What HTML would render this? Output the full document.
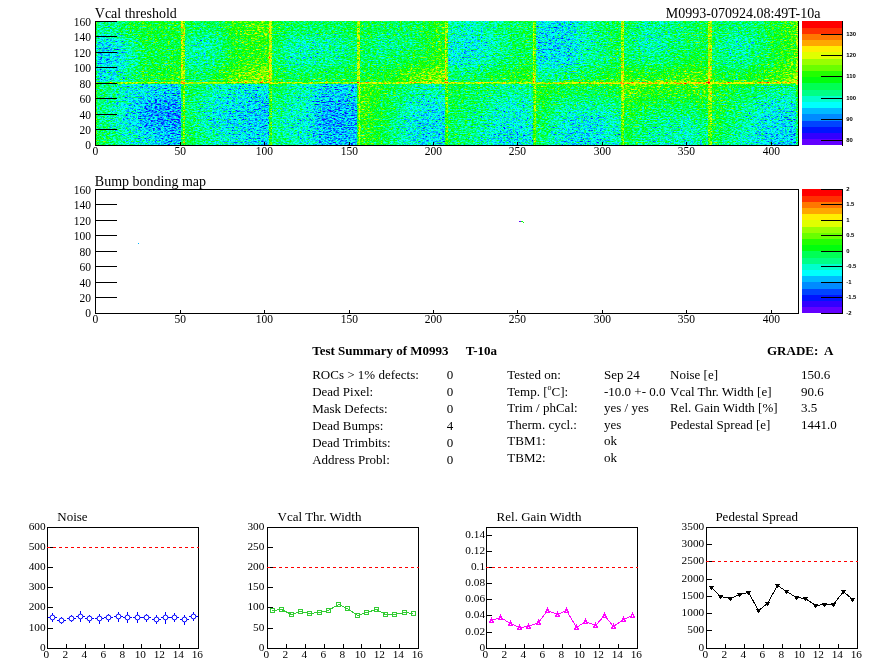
<!DOCTYPE html><html><head><meta charset="utf-8"><title>Test Summary of M0993</title>
<style>html,body{margin:0;padding:0;background:#fff}svg{display:block;will-change:transform}text{font-family:'Liberation Serif','Times New Roman',serif;fill:#000}.cb{font-family:'Liberation Sans',Arial,sans-serif;font-weight:bold;font-size:5.9px}.ax{font-size:11.5px}.gx{font-size:11.3px}.t{font-size:14px}.s{font-size:13px}.b{font-weight:bold}line,path,polyline,rect,circle{shape-rendering:crispEdges}.aa{shape-rendering:auto}</style></head><body>
<svg width="896" height="672" viewBox="0 0 896 672">
<rect width="896" height="672" fill="#fff"/>
<defs>
<filter id="bl" x="-20%" y="-20%" width="140%" height="140%" color-interpolation-filters="sRGB"><feGaussianBlur stdDeviation="5 4"/></filter>
<filter id="hm" x="95" y="21" width="703" height="124" filterUnits="userSpaceOnUse" color-interpolation-filters="sRGB"><feTurbulence type="fractalNoise" baseFrequency="0.31 0.73" numOctaves="1" seed="11" result="n1"/><feTurbulence type="fractalNoise" baseFrequency="0.47 0.87" numOctaves="1" seed="5" result="n2"/><feComposite in="n1" in2="n2" operator="arithmetic" k1="0" k2="0.5" k3="0.5" k4="0" result="n"/><feColorMatrix in="n" type="matrix" values="1 0 0 0 0 1 0 0 0 0 1 0 0 0 0 0 0 0 0 1" result="ng"/><feComposite in="SourceGraphic" in2="ng" operator="arithmetic" k1="0" k2="1" k3="0.950" k4="-0.4750" result="v"/><feComponentTransfer in="v"><feFuncR type="discrete" tableValues="0.387 0.200 0.000 0.000 0.000 0.000 0.000 0.000 0.000 0.000 0.000 0.133 0.413 0.600 0.880 1.000 1.000 1.000 1.000 1.000"/><feFuncG type="discrete" tableValues="0.000 0.000 0.080 0.267 0.547 0.733 1.000 1.000 1.000 1.000 1.000 1.000 1.000 1.000 1.000 0.933 0.653 0.467 0.187 0.000"/><feFuncB type="discrete" tableValues="1.000 1.000 1.000 1.000 1.000 1.000 0.987 0.800 0.520 0.333 0.053 0.000 0.000 0.000 0.000 0.000 0.000 0.000 0.000 0.000"/></feComponentTransfer></filter>
<clipPath id="c00"><rect x="95.50" y="21.50" width="87.88" height="62.00"/></clipPath>
<clipPath id="c01"><rect x="95.50" y="83.50" width="87.88" height="62.00"/></clipPath>
<clipPath id="c10"><rect x="183.38" y="21.50" width="87.88" height="62.00"/></clipPath>
<clipPath id="c11"><rect x="183.38" y="83.50" width="87.88" height="62.00"/></clipPath>
<clipPath id="c20"><rect x="271.25" y="21.50" width="87.88" height="62.00"/></clipPath>
<clipPath id="c21"><rect x="271.25" y="83.50" width="87.88" height="62.00"/></clipPath>
<clipPath id="c30"><rect x="359.12" y="21.50" width="87.88" height="62.00"/></clipPath>
<clipPath id="c31"><rect x="359.12" y="83.50" width="87.88" height="62.00"/></clipPath>
<clipPath id="c40"><rect x="447.00" y="21.50" width="87.88" height="62.00"/></clipPath>
<clipPath id="c41"><rect x="447.00" y="83.50" width="87.88" height="62.00"/></clipPath>
<clipPath id="c50"><rect x="534.88" y="21.50" width="87.88" height="62.00"/></clipPath>
<clipPath id="c51"><rect x="534.88" y="83.50" width="87.88" height="62.00"/></clipPath>
<clipPath id="c60"><rect x="622.75" y="21.50" width="87.88" height="62.00"/></clipPath>
<clipPath id="c61"><rect x="622.75" y="83.50" width="87.88" height="62.00"/></clipPath>
<clipPath id="c70"><rect x="710.62" y="21.50" width="87.88" height="62.00"/></clipPath>
<clipPath id="c71"><rect x="710.62" y="83.50" width="87.88" height="62.00"/></clipPath>
</defs>
<g filter="url(#hm)">
<rect x="95.00" y="21.00" width="703.00" height="124.00" fill="#6c6c6c"/>
<g clip-path="url(#c00)" transform="translate(-0.5,-0.5)"><g filter="url(#bl)">
<rect x="80.5" y="9.5" width="29.9" height="27.8" fill="#6a6a6a"/>
<rect x="110.1" y="9.5" width="14.9" height="27.8" fill="#707070"/>
<rect x="124.8" y="9.5" width="14.9" height="27.8" fill="#7d7d7d"/>
<rect x="139.4" y="9.5" width="14.9" height="27.8" fill="#838383"/>
<rect x="154.1" y="9.5" width="14.9" height="27.8" fill="#838383"/>
<rect x="168.7" y="9.5" width="29.9" height="27.8" fill="#838383"/>
<rect x="80.5" y="37.0" width="29.9" height="15.8" fill="#505050"/>
<rect x="110.1" y="37.0" width="14.9" height="15.8" fill="#545454"/>
<rect x="124.8" y="37.0" width="14.9" height="15.8" fill="#6a6a6a"/>
<rect x="139.4" y="37.0" width="14.9" height="15.8" fill="#7d7d7d"/>
<rect x="154.1" y="37.0" width="14.9" height="15.8" fill="#7d7d7d"/>
<rect x="168.7" y="37.0" width="29.9" height="15.8" fill="#7d7d7d"/>
<rect x="80.5" y="52.5" width="29.9" height="15.8" fill="#4c4c4c"/>
<rect x="110.1" y="52.5" width="14.9" height="15.8" fill="#545454"/>
<rect x="124.8" y="52.5" width="14.9" height="15.8" fill="#636363"/>
<rect x="139.4" y="52.5" width="14.9" height="15.8" fill="#7d7d7d"/>
<rect x="154.1" y="52.5" width="14.9" height="15.8" fill="#7d7d7d"/>
<rect x="168.7" y="52.5" width="29.9" height="15.8" fill="#838383"/>
<rect x="80.5" y="68.0" width="29.9" height="27.8" fill="#545454"/>
<rect x="110.1" y="68.0" width="14.9" height="27.8" fill="#5d5d5d"/>
<rect x="124.8" y="68.0" width="14.9" height="27.8" fill="#707070"/>
<rect x="139.4" y="68.0" width="14.9" height="27.8" fill="#838383"/>
<rect x="154.1" y="68.0" width="14.9" height="27.8" fill="#838383"/>
<rect x="168.7" y="68.0" width="29.9" height="27.8" fill="#8a8a8a"/>
</g></g>
<g clip-path="url(#c01)" transform="translate(-0.5,-0.5)"><g filter="url(#bl)">
<rect x="80.5" y="71.5" width="29.9" height="27.8" fill="#737373"/>
<rect x="110.1" y="71.5" width="14.9" height="27.8" fill="#666666"/>
<rect x="124.8" y="71.5" width="14.9" height="27.8" fill="#595959"/>
<rect x="139.4" y="71.5" width="14.9" height="27.8" fill="#525252"/>
<rect x="154.1" y="71.5" width="14.9" height="27.8" fill="#4e4e4e"/>
<rect x="168.7" y="71.5" width="29.9" height="27.8" fill="#4e4e4e"/>
<rect x="80.5" y="99.0" width="29.9" height="15.8" fill="#6c6c6c"/>
<rect x="110.1" y="99.0" width="14.9" height="15.8" fill="#606060"/>
<rect x="124.8" y="99.0" width="14.9" height="15.8" fill="#525252"/>
<rect x="139.4" y="99.0" width="14.9" height="15.8" fill="#424242"/>
<rect x="154.1" y="99.0" width="14.9" height="15.8" fill="#3e3e3e"/>
<rect x="168.7" y="99.0" width="29.9" height="15.8" fill="#3e3e3e"/>
<rect x="80.5" y="114.5" width="29.9" height="15.8" fill="#6c6c6c"/>
<rect x="110.1" y="114.5" width="14.9" height="15.8" fill="#606060"/>
<rect x="124.8" y="114.5" width="14.9" height="15.8" fill="#525252"/>
<rect x="139.4" y="114.5" width="14.9" height="15.8" fill="#424242"/>
<rect x="154.1" y="114.5" width="14.9" height="15.8" fill="#3e3e3e"/>
<rect x="168.7" y="114.5" width="29.9" height="15.8" fill="#3e3e3e"/>
<rect x="80.5" y="130.0" width="29.9" height="27.8" fill="#797979"/>
<rect x="110.1" y="130.0" width="14.9" height="27.8" fill="#6c6c6c"/>
<rect x="124.8" y="130.0" width="14.9" height="27.8" fill="#606060"/>
<rect x="139.4" y="130.0" width="14.9" height="27.8" fill="#555555"/>
<rect x="154.1" y="130.0" width="14.9" height="27.8" fill="#4a4a4a"/>
<rect x="168.7" y="130.0" width="29.9" height="27.8" fill="#464646"/>
</g></g>
<g clip-path="url(#c10)" transform="translate(-0.5,-0.5)"><g filter="url(#bl)">
<rect x="168.4" y="9.5" width="29.9" height="27.8" fill="#797979"/>
<rect x="198.0" y="9.5" width="14.9" height="27.8" fill="#737373"/>
<rect x="212.7" y="9.5" width="14.9" height="27.8" fill="#797979"/>
<rect x="227.3" y="9.5" width="14.9" height="27.8" fill="#8c8c8c"/>
<rect x="242.0" y="9.5" width="14.9" height="27.8" fill="#939393"/>
<rect x="256.6" y="9.5" width="29.9" height="27.8" fill="#999999"/>
<rect x="168.4" y="37.0" width="29.9" height="15.8" fill="#666666"/>
<rect x="198.0" y="37.0" width="14.9" height="15.8" fill="#606060"/>
<rect x="212.7" y="37.0" width="14.9" height="15.8" fill="#6c6c6c"/>
<rect x="227.3" y="37.0" width="14.9" height="15.8" fill="#868686"/>
<rect x="242.0" y="37.0" width="14.9" height="15.8" fill="#8c8c8c"/>
<rect x="256.6" y="37.0" width="29.9" height="15.8" fill="#8c8c8c"/>
<rect x="168.4" y="52.5" width="29.9" height="15.8" fill="#666666"/>
<rect x="198.0" y="52.5" width="14.9" height="15.8" fill="#666666"/>
<rect x="212.7" y="52.5" width="14.9" height="15.8" fill="#737373"/>
<rect x="227.3" y="52.5" width="14.9" height="15.8" fill="#868686"/>
<rect x="242.0" y="52.5" width="14.9" height="15.8" fill="#8c8c8c"/>
<rect x="256.6" y="52.5" width="29.9" height="15.8" fill="#939393"/>
<rect x="168.4" y="68.0" width="29.9" height="27.8" fill="#797979"/>
<rect x="198.0" y="68.0" width="14.9" height="27.8" fill="#737373"/>
<rect x="212.7" y="68.0" width="14.9" height="27.8" fill="#868686"/>
<rect x="227.3" y="68.0" width="14.9" height="27.8" fill="#999999"/>
<rect x="242.0" y="68.0" width="14.9" height="27.8" fill="#9f9f9f"/>
<rect x="256.6" y="68.0" width="29.9" height="27.8" fill="#a6a6a6"/>
</g></g>
<g clip-path="url(#c11)" transform="translate(-0.5,-0.5)"><g filter="url(#bl)">
<rect x="168.4" y="71.5" width="29.9" height="27.8" fill="#797979"/>
<rect x="198.0" y="71.5" width="14.9" height="27.8" fill="#6c6c6c"/>
<rect x="212.7" y="71.5" width="14.9" height="27.8" fill="#606060"/>
<rect x="227.3" y="71.5" width="14.9" height="27.8" fill="#595959"/>
<rect x="242.0" y="71.5" width="14.9" height="27.8" fill="#555555"/>
<rect x="256.6" y="71.5" width="29.9" height="27.8" fill="#555555"/>
<rect x="168.4" y="99.0" width="29.9" height="15.8" fill="#737373"/>
<rect x="198.0" y="99.0" width="14.9" height="15.8" fill="#606060"/>
<rect x="212.7" y="99.0" width="14.9" height="15.8" fill="#555555"/>
<rect x="227.3" y="99.0" width="14.9" height="15.8" fill="#525252"/>
<rect x="242.0" y="99.0" width="14.9" height="15.8" fill="#4e4e4e"/>
<rect x="256.6" y="99.0" width="29.9" height="15.8" fill="#4a4a4a"/>
<rect x="168.4" y="114.5" width="29.9" height="15.8" fill="#737373"/>
<rect x="198.0" y="114.5" width="14.9" height="15.8" fill="#606060"/>
<rect x="212.7" y="114.5" width="14.9" height="15.8" fill="#555555"/>
<rect x="227.3" y="114.5" width="14.9" height="15.8" fill="#525252"/>
<rect x="242.0" y="114.5" width="14.9" height="15.8" fill="#4e4e4e"/>
<rect x="256.6" y="114.5" width="29.9" height="15.8" fill="#4a4a4a"/>
<rect x="168.4" y="130.0" width="29.9" height="27.8" fill="#797979"/>
<rect x="198.0" y="130.0" width="14.9" height="27.8" fill="#6c6c6c"/>
<rect x="212.7" y="130.0" width="14.9" height="27.8" fill="#606060"/>
<rect x="227.3" y="130.0" width="14.9" height="27.8" fill="#555555"/>
<rect x="242.0" y="130.0" width="14.9" height="27.8" fill="#525252"/>
<rect x="256.6" y="130.0" width="29.9" height="27.8" fill="#4e4e4e"/>
</g></g>
<g clip-path="url(#c20)" transform="translate(-0.5,-0.5)"><g filter="url(#bl)">
<rect x="256.2" y="9.5" width="29.9" height="27.8" fill="#828282"/>
<rect x="285.9" y="9.5" width="14.9" height="27.8" fill="#757575"/>
<rect x="300.5" y="9.5" width="14.9" height="27.8" fill="#757575"/>
<rect x="315.2" y="9.5" width="14.9" height="27.8" fill="#757575"/>
<rect x="329.8" y="9.5" width="14.9" height="27.8" fill="#757575"/>
<rect x="344.5" y="9.5" width="29.9" height="27.8" fill="#7c7c7c"/>
<rect x="256.2" y="37.0" width="29.9" height="15.8" fill="#757575"/>
<rect x="285.9" y="37.0" width="14.9" height="15.8" fill="#626262"/>
<rect x="300.5" y="37.0" width="14.9" height="15.8" fill="#626262"/>
<rect x="315.2" y="37.0" width="14.9" height="15.8" fill="#626262"/>
<rect x="329.8" y="37.0" width="14.9" height="15.8" fill="#696969"/>
<rect x="344.5" y="37.0" width="29.9" height="15.8" fill="#6f6f6f"/>
<rect x="256.2" y="52.5" width="29.9" height="15.8" fill="#757575"/>
<rect x="285.9" y="52.5" width="14.9" height="15.8" fill="#626262"/>
<rect x="300.5" y="52.5" width="14.9" height="15.8" fill="#626262"/>
<rect x="315.2" y="52.5" width="14.9" height="15.8" fill="#696969"/>
<rect x="329.8" y="52.5" width="14.9" height="15.8" fill="#696969"/>
<rect x="344.5" y="52.5" width="29.9" height="15.8" fill="#757575"/>
<rect x="256.2" y="68.0" width="29.9" height="27.8" fill="#828282"/>
<rect x="285.9" y="68.0" width="14.9" height="27.8" fill="#757575"/>
<rect x="300.5" y="68.0" width="14.9" height="27.8" fill="#7c7c7c"/>
<rect x="315.2" y="68.0" width="14.9" height="27.8" fill="#7c7c7c"/>
<rect x="329.8" y="68.0" width="14.9" height="27.8" fill="#7c7c7c"/>
<rect x="344.5" y="68.0" width="29.9" height="27.8" fill="#828282"/>
</g></g>
<g clip-path="url(#c21)" transform="translate(-0.5,-0.5)"><g filter="url(#bl)">
<rect x="256.2" y="71.5" width="29.9" height="27.8" fill="#757575"/>
<rect x="285.9" y="71.5" width="14.9" height="27.8" fill="#696969"/>
<rect x="300.5" y="71.5" width="14.9" height="27.8" fill="#626262"/>
<rect x="315.2" y="71.5" width="14.9" height="27.8" fill="#4f4f4f"/>
<rect x="329.8" y="71.5" width="14.9" height="27.8" fill="#4b4b4b"/>
<rect x="344.5" y="71.5" width="29.9" height="27.8" fill="#4f4f4f"/>
<rect x="256.2" y="99.0" width="29.9" height="15.8" fill="#6f6f6f"/>
<rect x="285.9" y="99.0" width="14.9" height="15.8" fill="#626262"/>
<rect x="300.5" y="99.0" width="14.9" height="15.8" fill="#5c5c5c"/>
<rect x="315.2" y="99.0" width="14.9" height="15.8" fill="#444444"/>
<rect x="329.8" y="99.0" width="14.9" height="15.8" fill="#444444"/>
<rect x="344.5" y="99.0" width="29.9" height="15.8" fill="#484848"/>
<rect x="256.2" y="114.5" width="29.9" height="15.8" fill="#696969"/>
<rect x="285.9" y="114.5" width="14.9" height="15.8" fill="#5c5c5c"/>
<rect x="300.5" y="114.5" width="14.9" height="15.8" fill="#575757"/>
<rect x="315.2" y="114.5" width="14.9" height="15.8" fill="#444444"/>
<rect x="329.8" y="114.5" width="14.9" height="15.8" fill="#404040"/>
<rect x="344.5" y="114.5" width="29.9" height="15.8" fill="#444444"/>
<rect x="256.2" y="130.0" width="29.9" height="27.8" fill="#6f6f6f"/>
<rect x="285.9" y="130.0" width="14.9" height="27.8" fill="#626262"/>
<rect x="300.5" y="130.0" width="14.9" height="27.8" fill="#5c5c5c"/>
<rect x="315.2" y="130.0" width="14.9" height="27.8" fill="#484848"/>
<rect x="329.8" y="130.0" width="14.9" height="27.8" fill="#444444"/>
<rect x="344.5" y="130.0" width="29.9" height="27.8" fill="#484848"/>
</g></g>
<g clip-path="url(#c30)" transform="translate(-0.5,-0.5)"><g filter="url(#bl)">
<rect x="344.1" y="9.5" width="29.9" height="27.8" fill="#7d7d7d"/>
<rect x="373.8" y="9.5" width="14.9" height="27.8" fill="#777777"/>
<rect x="388.4" y="9.5" width="14.9" height="27.8" fill="#777777"/>
<rect x="403.1" y="9.5" width="14.9" height="27.8" fill="#777777"/>
<rect x="417.7" y="9.5" width="14.9" height="27.8" fill="#7d7d7d"/>
<rect x="432.4" y="9.5" width="29.9" height="27.8" fill="#8a8a8a"/>
<rect x="344.1" y="37.0" width="29.9" height="15.8" fill="#777777"/>
<rect x="373.8" y="37.0" width="14.9" height="15.8" fill="#6a6a6a"/>
<rect x="388.4" y="37.0" width="14.9" height="15.8" fill="#6a6a6a"/>
<rect x="403.1" y="37.0" width="14.9" height="15.8" fill="#707070"/>
<rect x="417.7" y="37.0" width="14.9" height="15.8" fill="#7d7d7d"/>
<rect x="432.4" y="37.0" width="29.9" height="15.8" fill="#8a8a8a"/>
<rect x="344.1" y="52.5" width="29.9" height="15.8" fill="#777777"/>
<rect x="373.8" y="52.5" width="14.9" height="15.8" fill="#707070"/>
<rect x="388.4" y="52.5" width="14.9" height="15.8" fill="#777777"/>
<rect x="403.1" y="52.5" width="14.9" height="15.8" fill="#7d7d7d"/>
<rect x="417.7" y="52.5" width="14.9" height="15.8" fill="#838383"/>
<rect x="432.4" y="52.5" width="29.9" height="15.8" fill="#909090"/>
<rect x="344.1" y="68.0" width="29.9" height="27.8" fill="#838383"/>
<rect x="373.8" y="68.0" width="14.9" height="27.8" fill="#838383"/>
<rect x="388.4" y="68.0" width="14.9" height="27.8" fill="#8a8a8a"/>
<rect x="403.1" y="68.0" width="14.9" height="27.8" fill="#969696"/>
<rect x="417.7" y="68.0" width="14.9" height="27.8" fill="#9d9d9d"/>
<rect x="432.4" y="68.0" width="29.9" height="27.8" fill="#a3a3a3"/>
</g></g>
<g clip-path="url(#c31)" transform="translate(-0.5,-0.5)"><g filter="url(#bl)">
<rect x="344.1" y="71.5" width="29.9" height="27.8" fill="#939393"/>
<rect x="373.8" y="71.5" width="14.9" height="27.8" fill="#868686"/>
<rect x="388.4" y="71.5" width="14.9" height="27.8" fill="#797979"/>
<rect x="403.1" y="71.5" width="14.9" height="27.8" fill="#6c6c6c"/>
<rect x="417.7" y="71.5" width="14.9" height="27.8" fill="#666666"/>
<rect x="432.4" y="71.5" width="29.9" height="27.8" fill="#666666"/>
<rect x="344.1" y="99.0" width="29.9" height="15.8" fill="#939393"/>
<rect x="373.8" y="99.0" width="14.9" height="15.8" fill="#808080"/>
<rect x="388.4" y="99.0" width="14.9" height="15.8" fill="#737373"/>
<rect x="403.1" y="99.0" width="14.9" height="15.8" fill="#606060"/>
<rect x="417.7" y="99.0" width="14.9" height="15.8" fill="#555555"/>
<rect x="432.4" y="99.0" width="29.9" height="15.8" fill="#555555"/>
<rect x="344.1" y="114.5" width="29.9" height="15.8" fill="#8c8c8c"/>
<rect x="373.8" y="114.5" width="14.9" height="15.8" fill="#808080"/>
<rect x="388.4" y="114.5" width="14.9" height="15.8" fill="#6c6c6c"/>
<rect x="403.1" y="114.5" width="14.9" height="15.8" fill="#595959"/>
<rect x="417.7" y="114.5" width="14.9" height="15.8" fill="#525252"/>
<rect x="432.4" y="114.5" width="29.9" height="15.8" fill="#525252"/>
<rect x="344.1" y="130.0" width="29.9" height="27.8" fill="#8c8c8c"/>
<rect x="373.8" y="130.0" width="14.9" height="27.8" fill="#808080"/>
<rect x="388.4" y="130.0" width="14.9" height="27.8" fill="#6c6c6c"/>
<rect x="403.1" y="130.0" width="14.9" height="27.8" fill="#595959"/>
<rect x="417.7" y="130.0" width="14.9" height="27.8" fill="#525252"/>
<rect x="432.4" y="130.0" width="29.9" height="27.8" fill="#525252"/>
</g></g>
<g clip-path="url(#c40)" transform="translate(-0.5,-0.5)"><g filter="url(#bl)">
<rect x="432.0" y="9.5" width="29.9" height="27.8" fill="#666666"/>
<rect x="461.6" y="9.5" width="14.9" height="27.8" fill="#606060"/>
<rect x="476.3" y="9.5" width="14.9" height="27.8" fill="#666666"/>
<rect x="490.9" y="9.5" width="14.9" height="27.8" fill="#6c6c6c"/>
<rect x="505.6" y="9.5" width="14.9" height="27.8" fill="#737373"/>
<rect x="520.2" y="9.5" width="29.9" height="27.8" fill="#797979"/>
<rect x="432.0" y="37.0" width="29.9" height="15.8" fill="#595959"/>
<rect x="461.6" y="37.0" width="14.9" height="15.8" fill="#555555"/>
<rect x="476.3" y="37.0" width="14.9" height="15.8" fill="#595959"/>
<rect x="490.9" y="37.0" width="14.9" height="15.8" fill="#666666"/>
<rect x="505.6" y="37.0" width="14.9" height="15.8" fill="#737373"/>
<rect x="520.2" y="37.0" width="29.9" height="15.8" fill="#797979"/>
<rect x="432.0" y="52.5" width="29.9" height="15.8" fill="#595959"/>
<rect x="461.6" y="52.5" width="14.9" height="15.8" fill="#595959"/>
<rect x="476.3" y="52.5" width="14.9" height="15.8" fill="#606060"/>
<rect x="490.9" y="52.5" width="14.9" height="15.8" fill="#6c6c6c"/>
<rect x="505.6" y="52.5" width="14.9" height="15.8" fill="#737373"/>
<rect x="520.2" y="52.5" width="29.9" height="15.8" fill="#797979"/>
<rect x="432.0" y="68.0" width="29.9" height="27.8" fill="#737373"/>
<rect x="461.6" y="68.0" width="14.9" height="27.8" fill="#737373"/>
<rect x="476.3" y="68.0" width="14.9" height="27.8" fill="#797979"/>
<rect x="490.9" y="68.0" width="14.9" height="27.8" fill="#808080"/>
<rect x="505.6" y="68.0" width="14.9" height="27.8" fill="#868686"/>
<rect x="520.2" y="68.0" width="29.9" height="27.8" fill="#8c8c8c"/>
</g></g>
<g clip-path="url(#c41)" transform="translate(-0.5,-0.5)"><g filter="url(#bl)">
<rect x="432.0" y="71.5" width="29.9" height="27.8" fill="#7a7a7a"/>
<rect x="461.6" y="71.5" width="14.9" height="27.8" fill="#7a7a7a"/>
<rect x="476.3" y="71.5" width="14.9" height="27.8" fill="#747474"/>
<rect x="490.9" y="71.5" width="14.9" height="27.8" fill="#6e6e6e"/>
<rect x="505.6" y="71.5" width="14.9" height="27.8" fill="#676767"/>
<rect x="520.2" y="71.5" width="29.9" height="27.8" fill="#6e6e6e"/>
<rect x="432.0" y="99.0" width="29.9" height="15.8" fill="#7a7a7a"/>
<rect x="461.6" y="99.0" width="14.9" height="15.8" fill="#747474"/>
<rect x="476.3" y="99.0" width="14.9" height="15.8" fill="#6e6e6e"/>
<rect x="490.9" y="99.0" width="14.9" height="15.8" fill="#616161"/>
<rect x="505.6" y="99.0" width="14.9" height="15.8" fill="#5b5b5b"/>
<rect x="520.2" y="99.0" width="29.9" height="15.8" fill="#616161"/>
<rect x="432.0" y="114.5" width="29.9" height="15.8" fill="#747474"/>
<rect x="461.6" y="114.5" width="14.9" height="15.8" fill="#6e6e6e"/>
<rect x="476.3" y="114.5" width="14.9" height="15.8" fill="#676767"/>
<rect x="490.9" y="114.5" width="14.9" height="15.8" fill="#5b5b5b"/>
<rect x="505.6" y="114.5" width="14.9" height="15.8" fill="#565656"/>
<rect x="520.2" y="114.5" width="29.9" height="15.8" fill="#5b5b5b"/>
<rect x="432.0" y="130.0" width="29.9" height="27.8" fill="#747474"/>
<rect x="461.6" y="130.0" width="14.9" height="27.8" fill="#6e6e6e"/>
<rect x="476.3" y="130.0" width="14.9" height="27.8" fill="#616161"/>
<rect x="490.9" y="130.0" width="14.9" height="27.8" fill="#565656"/>
<rect x="505.6" y="130.0" width="14.9" height="27.8" fill="#525252"/>
<rect x="520.2" y="130.0" width="29.9" height="27.8" fill="#565656"/>
</g></g>
<g clip-path="url(#c50)" transform="translate(-0.5,-0.5)"><g filter="url(#bl)">
<rect x="519.9" y="9.5" width="29.9" height="27.8" fill="#555555"/>
<rect x="549.5" y="9.5" width="14.9" height="27.8" fill="#525252"/>
<rect x="564.2" y="9.5" width="14.9" height="27.8" fill="#555555"/>
<rect x="578.8" y="9.5" width="14.9" height="27.8" fill="#666666"/>
<rect x="593.5" y="9.5" width="14.9" height="27.8" fill="#737373"/>
<rect x="608.1" y="9.5" width="29.9" height="27.8" fill="#797979"/>
<rect x="519.9" y="37.0" width="29.9" height="15.8" fill="#525252"/>
<rect x="549.5" y="37.0" width="14.9" height="15.8" fill="#4e4e4e"/>
<rect x="564.2" y="37.0" width="14.9" height="15.8" fill="#525252"/>
<rect x="578.8" y="37.0" width="14.9" height="15.8" fill="#606060"/>
<rect x="593.5" y="37.0" width="14.9" height="15.8" fill="#6c6c6c"/>
<rect x="608.1" y="37.0" width="29.9" height="15.8" fill="#797979"/>
<rect x="519.9" y="52.5" width="29.9" height="15.8" fill="#555555"/>
<rect x="549.5" y="52.5" width="14.9" height="15.8" fill="#525252"/>
<rect x="564.2" y="52.5" width="14.9" height="15.8" fill="#555555"/>
<rect x="578.8" y="52.5" width="14.9" height="15.8" fill="#666666"/>
<rect x="593.5" y="52.5" width="14.9" height="15.8" fill="#6c6c6c"/>
<rect x="608.1" y="52.5" width="29.9" height="15.8" fill="#797979"/>
<rect x="519.9" y="68.0" width="29.9" height="27.8" fill="#6c6c6c"/>
<rect x="549.5" y="68.0" width="14.9" height="27.8" fill="#6c6c6c"/>
<rect x="564.2" y="68.0" width="14.9" height="27.8" fill="#737373"/>
<rect x="578.8" y="68.0" width="14.9" height="27.8" fill="#797979"/>
<rect x="593.5" y="68.0" width="14.9" height="27.8" fill="#808080"/>
<rect x="608.1" y="68.0" width="29.9" height="27.8" fill="#868686"/>
</g></g>
<g clip-path="url(#c51)" transform="translate(-0.5,-0.5)"><g filter="url(#bl)">
<rect x="519.9" y="71.5" width="29.9" height="27.8" fill="#878787"/>
<rect x="549.5" y="71.5" width="14.9" height="27.8" fill="#818181"/>
<rect x="564.2" y="71.5" width="14.9" height="27.8" fill="#7a7a7a"/>
<rect x="578.8" y="71.5" width="14.9" height="27.8" fill="#7a7a7a"/>
<rect x="593.5" y="71.5" width="14.9" height="27.8" fill="#7a7a7a"/>
<rect x="608.1" y="71.5" width="29.9" height="27.8" fill="#818181"/>
<rect x="519.9" y="99.0" width="29.9" height="15.8" fill="#818181"/>
<rect x="549.5" y="99.0" width="14.9" height="15.8" fill="#6e6e6e"/>
<rect x="564.2" y="99.0" width="14.9" height="15.8" fill="#676767"/>
<rect x="578.8" y="99.0" width="14.9" height="15.8" fill="#676767"/>
<rect x="593.5" y="99.0" width="14.9" height="15.8" fill="#676767"/>
<rect x="608.1" y="99.0" width="29.9" height="15.8" fill="#6e6e6e"/>
<rect x="519.9" y="114.5" width="29.9" height="15.8" fill="#7a7a7a"/>
<rect x="549.5" y="114.5" width="14.9" height="15.8" fill="#616161"/>
<rect x="564.2" y="114.5" width="14.9" height="15.8" fill="#565656"/>
<rect x="578.8" y="114.5" width="14.9" height="15.8" fill="#565656"/>
<rect x="593.5" y="114.5" width="14.9" height="15.8" fill="#565656"/>
<rect x="608.1" y="114.5" width="29.9" height="15.8" fill="#616161"/>
<rect x="519.9" y="130.0" width="29.9" height="27.8" fill="#747474"/>
<rect x="549.5" y="130.0" width="14.9" height="27.8" fill="#5b5b5b"/>
<rect x="564.2" y="130.0" width="14.9" height="27.8" fill="#525252"/>
<rect x="578.8" y="130.0" width="14.9" height="27.8" fill="#525252"/>
<rect x="593.5" y="130.0" width="14.9" height="27.8" fill="#565656"/>
<rect x="608.1" y="130.0" width="29.9" height="27.8" fill="#616161"/>
</g></g>
<g clip-path="url(#c60)" transform="translate(-0.5,-0.5)"><g filter="url(#bl)">
<rect x="607.8" y="9.5" width="29.9" height="27.8" fill="#757575"/>
<rect x="637.4" y="9.5" width="14.9" height="27.8" fill="#696969"/>
<rect x="652.0" y="9.5" width="14.9" height="27.8" fill="#696969"/>
<rect x="666.7" y="9.5" width="14.9" height="27.8" fill="#6f6f6f"/>
<rect x="681.3" y="9.5" width="14.9" height="27.8" fill="#757575"/>
<rect x="696.0" y="9.5" width="29.9" height="27.8" fill="#7c7c7c"/>
<rect x="607.8" y="37.0" width="29.9" height="15.8" fill="#6f6f6f"/>
<rect x="637.4" y="37.0" width="14.9" height="15.8" fill="#626262"/>
<rect x="652.0" y="37.0" width="14.9" height="15.8" fill="#626262"/>
<rect x="666.7" y="37.0" width="14.9" height="15.8" fill="#6f6f6f"/>
<rect x="681.3" y="37.0" width="14.9" height="15.8" fill="#757575"/>
<rect x="696.0" y="37.0" width="29.9" height="15.8" fill="#7c7c7c"/>
<rect x="607.8" y="52.5" width="29.9" height="15.8" fill="#757575"/>
<rect x="637.4" y="52.5" width="14.9" height="15.8" fill="#6f6f6f"/>
<rect x="652.0" y="52.5" width="14.9" height="15.8" fill="#6f6f6f"/>
<rect x="666.7" y="52.5" width="14.9" height="15.8" fill="#757575"/>
<rect x="681.3" y="52.5" width="14.9" height="15.8" fill="#7c7c7c"/>
<rect x="696.0" y="52.5" width="29.9" height="15.8" fill="#828282"/>
<rect x="607.8" y="68.0" width="29.9" height="27.8" fill="#8f8f8f"/>
<rect x="637.4" y="68.0" width="14.9" height="27.8" fill="#888888"/>
<rect x="652.0" y="68.0" width="14.9" height="27.8" fill="#888888"/>
<rect x="666.7" y="68.0" width="14.9" height="27.8" fill="#8f8f8f"/>
<rect x="681.3" y="68.0" width="14.9" height="27.8" fill="#959595"/>
<rect x="696.0" y="68.0" width="29.9" height="27.8" fill="#959595"/>
</g></g>
<g clip-path="url(#c61)" transform="translate(-0.5,-0.5)"><g filter="url(#bl)">
<rect x="607.8" y="71.5" width="29.9" height="27.8" fill="#989898"/>
<rect x="637.4" y="71.5" width="14.9" height="27.8" fill="#919191"/>
<rect x="652.0" y="71.5" width="14.9" height="27.8" fill="#8b8b8b"/>
<rect x="666.7" y="71.5" width="14.9" height="27.8" fill="#8b8b8b"/>
<rect x="681.3" y="71.5" width="14.9" height="27.8" fill="#8b8b8b"/>
<rect x="696.0" y="71.5" width="29.9" height="27.8" fill="#919191"/>
<rect x="607.8" y="99.0" width="29.9" height="15.8" fill="#858585"/>
<rect x="637.4" y="99.0" width="14.9" height="15.8" fill="#7e7e7e"/>
<rect x="652.0" y="99.0" width="14.9" height="15.8" fill="#787878"/>
<rect x="666.7" y="99.0" width="14.9" height="15.8" fill="#787878"/>
<rect x="681.3" y="99.0" width="14.9" height="15.8" fill="#787878"/>
<rect x="696.0" y="99.0" width="29.9" height="15.8" fill="#7e7e7e"/>
<rect x="607.8" y="114.5" width="29.9" height="15.8" fill="#7e7e7e"/>
<rect x="637.4" y="114.5" width="14.9" height="15.8" fill="#717171"/>
<rect x="652.0" y="114.5" width="14.9" height="15.8" fill="#6b6b6b"/>
<rect x="666.7" y="114.5" width="14.9" height="15.8" fill="#6b6b6b"/>
<rect x="681.3" y="114.5" width="14.9" height="15.8" fill="#656565"/>
<rect x="696.0" y="114.5" width="29.9" height="15.8" fill="#717171"/>
<rect x="607.8" y="130.0" width="29.9" height="27.8" fill="#787878"/>
<rect x="637.4" y="130.0" width="14.9" height="27.8" fill="#6b6b6b"/>
<rect x="652.0" y="130.0" width="14.9" height="27.8" fill="#656565"/>
<rect x="666.7" y="130.0" width="14.9" height="27.8" fill="#656565"/>
<rect x="681.3" y="130.0" width="14.9" height="27.8" fill="#5e5e5e"/>
<rect x="696.0" y="130.0" width="29.9" height="27.8" fill="#6b6b6b"/>
</g></g>
<g clip-path="url(#c70)" transform="translate(-0.5,-0.5)"><g filter="url(#bl)">
<rect x="695.6" y="9.5" width="29.9" height="27.8" fill="#777777"/>
<rect x="725.3" y="9.5" width="14.9" height="27.8" fill="#707070"/>
<rect x="739.9" y="9.5" width="14.9" height="27.8" fill="#707070"/>
<rect x="754.6" y="9.5" width="14.9" height="27.8" fill="#777777"/>
<rect x="769.2" y="9.5" width="14.9" height="27.8" fill="#838383"/>
<rect x="783.9" y="9.5" width="29.9" height="27.8" fill="#909090"/>
<rect x="695.6" y="37.0" width="29.9" height="15.8" fill="#707070"/>
<rect x="725.3" y="37.0" width="14.9" height="15.8" fill="#636363"/>
<rect x="739.9" y="37.0" width="14.9" height="15.8" fill="#636363"/>
<rect x="754.6" y="37.0" width="14.9" height="15.8" fill="#707070"/>
<rect x="769.2" y="37.0" width="14.9" height="15.8" fill="#838383"/>
<rect x="783.9" y="37.0" width="29.9" height="15.8" fill="#909090"/>
<rect x="695.6" y="52.5" width="29.9" height="15.8" fill="#707070"/>
<rect x="725.3" y="52.5" width="14.9" height="15.8" fill="#6a6a6a"/>
<rect x="739.9" y="52.5" width="14.9" height="15.8" fill="#6a6a6a"/>
<rect x="754.6" y="52.5" width="14.9" height="15.8" fill="#777777"/>
<rect x="769.2" y="52.5" width="14.9" height="15.8" fill="#838383"/>
<rect x="783.9" y="52.5" width="29.9" height="15.8" fill="#909090"/>
<rect x="695.6" y="68.0" width="29.9" height="27.8" fill="#838383"/>
<rect x="725.3" y="68.0" width="14.9" height="27.8" fill="#7d7d7d"/>
<rect x="739.9" y="68.0" width="14.9" height="27.8" fill="#838383"/>
<rect x="754.6" y="68.0" width="14.9" height="27.8" fill="#8a8a8a"/>
<rect x="769.2" y="68.0" width="14.9" height="27.8" fill="#909090"/>
<rect x="783.9" y="68.0" width="29.9" height="27.8" fill="#9d9d9d"/>
</g></g>
<g clip-path="url(#c71)" transform="translate(-0.5,-0.5)"><g filter="url(#bl)">
<rect x="695.6" y="71.5" width="29.9" height="27.8" fill="#858585"/>
<rect x="725.3" y="71.5" width="14.9" height="27.8" fill="#7e7e7e"/>
<rect x="739.9" y="71.5" width="14.9" height="27.8" fill="#787878"/>
<rect x="754.6" y="71.5" width="14.9" height="27.8" fill="#717171"/>
<rect x="769.2" y="71.5" width="14.9" height="27.8" fill="#6b6b6b"/>
<rect x="783.9" y="71.5" width="29.9" height="27.8" fill="#6b6b6b"/>
<rect x="695.6" y="99.0" width="29.9" height="15.8" fill="#7e7e7e"/>
<rect x="725.3" y="99.0" width="14.9" height="15.8" fill="#787878"/>
<rect x="739.9" y="99.0" width="14.9" height="15.8" fill="#6b6b6b"/>
<rect x="754.6" y="99.0" width="14.9" height="15.8" fill="#5e5e5e"/>
<rect x="769.2" y="99.0" width="14.9" height="15.8" fill="#585858"/>
<rect x="783.9" y="99.0" width="29.9" height="15.8" fill="#585858"/>
<rect x="695.6" y="114.5" width="29.9" height="15.8" fill="#7e7e7e"/>
<rect x="725.3" y="114.5" width="14.9" height="15.8" fill="#717171"/>
<rect x="739.9" y="114.5" width="14.9" height="15.8" fill="#656565"/>
<rect x="754.6" y="114.5" width="14.9" height="15.8" fill="#585858"/>
<rect x="769.2" y="114.5" width="14.9" height="15.8" fill="#515151"/>
<rect x="783.9" y="114.5" width="29.9" height="15.8" fill="#515151"/>
<rect x="695.6" y="130.0" width="29.9" height="27.8" fill="#787878"/>
<rect x="725.3" y="130.0" width="14.9" height="27.8" fill="#6b6b6b"/>
<rect x="739.9" y="130.0" width="14.9" height="27.8" fill="#5e5e5e"/>
<rect x="754.6" y="130.0" width="14.9" height="27.8" fill="#555555"/>
<rect x="769.2" y="130.0" width="14.9" height="27.8" fill="#4d4d4d"/>
<rect x="783.9" y="130.0" width="29.9" height="27.8" fill="#4d4d4d"/>
</g></g>
<rect x="181.18" y="21.00" width="3.4" height="124.00" fill="#fff" fill-opacity="0.3"/>
<rect x="181.18" y="21.00" width="3.4" height="62.00" fill="#fff" fill-opacity="0.12"/>
<rect x="269.05" y="21.00" width="3.4" height="124.00" fill="#fff" fill-opacity="0.3"/>
<rect x="269.05" y="21.00" width="3.4" height="62.00" fill="#fff" fill-opacity="0.12"/>
<rect x="356.93" y="21.00" width="3.4" height="124.00" fill="#fff" fill-opacity="0.3"/>
<rect x="356.93" y="21.00" width="3.4" height="62.00" fill="#fff" fill-opacity="0.12"/>
<rect x="444.80" y="21.00" width="3.4" height="124.00" fill="#fff" fill-opacity="0.3"/>
<rect x="444.80" y="21.00" width="3.4" height="62.00" fill="#fff" fill-opacity="0.12"/>
<rect x="532.67" y="21.00" width="3.4" height="124.00" fill="#fff" fill-opacity="0.3"/>
<rect x="532.67" y="21.00" width="3.4" height="62.00" fill="#fff" fill-opacity="0.12"/>
<rect x="620.55" y="21.00" width="3.4" height="124.00" fill="#fff" fill-opacity="0.3"/>
<rect x="620.55" y="21.00" width="3.4" height="62.00" fill="#fff" fill-opacity="0.12"/>
<rect x="708.42" y="21.00" width="3.4" height="124.00" fill="#fff" fill-opacity="0.3"/>
<rect x="708.42" y="21.00" width="3.4" height="62.00" fill="#fff" fill-opacity="0.12"/>
<rect x="95.00" y="82.20" width="703.00" height="1.6" fill="#fff" fill-opacity="0.4"/>
<rect x="95" y="21" width="1.7" height="124" fill="#fff" fill-opacity="0.2"/><rect x="796.3" y="21" width="1.7" height="124" fill="#fff" fill-opacity="0.2"/>
<rect x="560" y="80" width="238" height="6" fill="#fff" fill-opacity="0.1"/>
</g>
<text class="t" x="94.8" y="17.7">Vcal threshold</text>
<path d="M95.5 21.0V145.5H798.5V21.0" fill="none" stroke="#000" stroke-width="1"/>
<line x1="95.5" y1="145.5" x2="117.0" y2="145.5" stroke="#000"/>
<text class="ax" text-anchor="end" x="91.0" y="149.2">0</text>
<line x1="95.5" y1="129.5" x2="117.0" y2="129.5" stroke="#000"/>
<text class="ax" text-anchor="end" x="91.0" y="133.8">20</text>
<line x1="95.5" y1="114.5" x2="117.0" y2="114.5" stroke="#000"/>
<text class="ax" text-anchor="end" x="91.0" y="118.8">40</text>
<line x1="95.5" y1="98.5" x2="117.0" y2="98.5" stroke="#000"/>
<text class="ax" text-anchor="end" x="91.0" y="102.8">60</text>
<line x1="95.5" y1="83.5" x2="117.0" y2="83.5" stroke="#000"/>
<text class="ax" text-anchor="end" x="91.0" y="87.8">80</text>
<line x1="95.5" y1="67.5" x2="117.0" y2="67.5" stroke="#000"/>
<text class="ax" text-anchor="end" x="91.0" y="71.8">100</text>
<line x1="95.5" y1="52.5" x2="117.0" y2="52.5" stroke="#000"/>
<text class="ax" text-anchor="end" x="91.0" y="56.8">120</text>
<line x1="95.5" y1="36.5" x2="117.0" y2="36.5" stroke="#000"/>
<text class="ax" text-anchor="end" x="91.0" y="40.8">140</text>
<line x1="95.5" y1="21.5" x2="117.0" y2="21.5" stroke="#000"/>
<text class="ax" text-anchor="end" x="91.0" y="25.8">160</text>
<line x1="95.5" y1="145.5" x2="95.5" y2="141.5" stroke="#000"/>
<text class="ax" text-anchor="middle" x="95.3" y="154.9">0</text>
<line x1="180.5" y1="145.5" x2="180.5" y2="141.5" stroke="#000"/>
<text class="ax" text-anchor="middle" x="180.3" y="154.9">50</text>
<line x1="264.5" y1="145.5" x2="264.5" y2="141.5" stroke="#000"/>
<text class="ax" text-anchor="middle" x="264.3" y="154.9">100</text>
<line x1="349.5" y1="145.5" x2="349.5" y2="141.5" stroke="#000"/>
<text class="ax" text-anchor="middle" x="349.3" y="154.9">150</text>
<line x1="433.5" y1="145.5" x2="433.5" y2="141.5" stroke="#000"/>
<text class="ax" text-anchor="middle" x="433.3" y="154.9">200</text>
<line x1="517.5" y1="145.5" x2="517.5" y2="141.5" stroke="#000"/>
<text class="ax" text-anchor="middle" x="517.3" y="154.9">250</text>
<line x1="602.5" y1="145.5" x2="602.5" y2="141.5" stroke="#000"/>
<text class="ax" text-anchor="middle" x="602.3" y="154.9">300</text>
<line x1="686.5" y1="145.5" x2="686.5" y2="141.5" stroke="#000"/>
<text class="ax" text-anchor="middle" x="686.3" y="154.9">350</text>
<line x1="771.5" y1="145.5" x2="771.5" y2="141.5" stroke="#000"/>
<text class="ax" text-anchor="middle" x="771.3" y="154.9">400</text>
<text class="t" text-anchor="end" x="820.5" y="17.5">M0993-070924.08:49T-10a</text>
<text class="t" x="94.8" y="185.7">Bump bonding map</text>
<path d="M95.5 189.0V313.5H798.5V189.0H95.5" fill="none" stroke="#000" stroke-width="1"/>
<line x1="95.5" y1="313.5" x2="117.0" y2="313.5" stroke="#000"/>
<text class="ax" text-anchor="end" x="91.0" y="317.2">0</text>
<line x1="95.5" y1="297.5" x2="117.0" y2="297.5" stroke="#000"/>
<text class="ax" text-anchor="end" x="91.0" y="301.8">20</text>
<line x1="95.5" y1="282.5" x2="117.0" y2="282.5" stroke="#000"/>
<text class="ax" text-anchor="end" x="91.0" y="286.8">40</text>
<line x1="95.5" y1="266.5" x2="117.0" y2="266.5" stroke="#000"/>
<text class="ax" text-anchor="end" x="91.0" y="270.8">60</text>
<line x1="95.5" y1="251.5" x2="117.0" y2="251.5" stroke="#000"/>
<text class="ax" text-anchor="end" x="91.0" y="255.8">80</text>
<line x1="95.5" y1="235.5" x2="117.0" y2="235.5" stroke="#000"/>
<text class="ax" text-anchor="end" x="91.0" y="239.8">100</text>
<line x1="95.5" y1="220.5" x2="117.0" y2="220.5" stroke="#000"/>
<text class="ax" text-anchor="end" x="91.0" y="224.8">120</text>
<line x1="95.5" y1="204.5" x2="117.0" y2="204.5" stroke="#000"/>
<text class="ax" text-anchor="end" x="91.0" y="208.8">140</text>
<line x1="95.5" y1="189.5" x2="117.0" y2="189.5" stroke="#000"/>
<text class="ax" text-anchor="end" x="91.0" y="193.8">160</text>
<line x1="95.5" y1="313.5" x2="95.5" y2="309.5" stroke="#000"/>
<text class="ax" text-anchor="middle" x="95.3" y="322.9">0</text>
<line x1="180.5" y1="313.5" x2="180.5" y2="309.5" stroke="#000"/>
<text class="ax" text-anchor="middle" x="180.3" y="322.9">50</text>
<line x1="264.5" y1="313.5" x2="264.5" y2="309.5" stroke="#000"/>
<text class="ax" text-anchor="middle" x="264.3" y="322.9">100</text>
<line x1="349.5" y1="313.5" x2="349.5" y2="309.5" stroke="#000"/>
<text class="ax" text-anchor="middle" x="349.3" y="322.9">150</text>
<line x1="433.5" y1="313.5" x2="433.5" y2="309.5" stroke="#000"/>
<text class="ax" text-anchor="middle" x="433.3" y="322.9">200</text>
<line x1="517.5" y1="313.5" x2="517.5" y2="309.5" stroke="#000"/>
<text class="ax" text-anchor="middle" x="517.3" y="322.9">250</text>
<line x1="602.5" y1="313.5" x2="602.5" y2="309.5" stroke="#000"/>
<text class="ax" text-anchor="middle" x="602.3" y="322.9">300</text>
<line x1="686.5" y1="313.5" x2="686.5" y2="309.5" stroke="#000"/>
<text class="ax" text-anchor="middle" x="686.3" y="322.9">350</text>
<line x1="771.5" y1="313.5" x2="771.5" y2="309.5" stroke="#000"/>
<text class="ax" text-anchor="middle" x="771.3" y="322.9">400</text>
<rect x="138" y="243" width="1" height="1" fill="#00b4ff"/>
<rect x="519" y="221" width="2" height="1" fill="#6000ff"/><rect x="521" y="221" width="2" height="1" fill="#0cff0c"/><rect x="523" y="222" width="1" height="1" fill="#0cff0c"/>
<rect x="802.0" y="138.80" width="40.5" height="6.50" fill="#6300ff"/>
<rect x="802.0" y="132.60" width="40.5" height="6.50" fill="#3300ff"/>
<rect x="802.0" y="126.40" width="40.5" height="6.50" fill="#0014ff"/>
<rect x="802.0" y="120.20" width="40.5" height="6.50" fill="#0044ff"/>
<rect x="802.0" y="114.00" width="40.5" height="6.50" fill="#008bff"/>
<rect x="802.0" y="107.80" width="40.5" height="6.50" fill="#00bbff"/>
<rect x="802.0" y="101.60" width="40.5" height="6.50" fill="#00fffc"/>
<rect x="802.0" y="95.40" width="40.5" height="6.50" fill="#00ffcc"/>
<rect x="802.0" y="89.20" width="40.5" height="6.50" fill="#00ff85"/>
<rect x="802.0" y="83.00" width="40.5" height="6.50" fill="#00ff55"/>
<rect x="802.0" y="76.80" width="40.5" height="6.50" fill="#00ff0e"/>
<rect x="802.0" y="70.60" width="40.5" height="6.50" fill="#22ff00"/>
<rect x="802.0" y="64.40" width="40.5" height="6.50" fill="#69ff00"/>
<rect x="802.0" y="58.20" width="40.5" height="6.50" fill="#99ff00"/>
<rect x="802.0" y="52.00" width="40.5" height="6.50" fill="#e0ff00"/>
<rect x="802.0" y="45.80" width="40.5" height="6.50" fill="#ffee00"/>
<rect x="802.0" y="39.60" width="40.5" height="6.50" fill="#ffa700"/>
<rect x="802.0" y="33.40" width="40.5" height="6.50" fill="#ff7700"/>
<rect x="802.0" y="27.20" width="40.5" height="6.50" fill="#ff3000"/>
<rect x="802.0" y="21.00" width="40.5" height="6.50" fill="#ff0000"/>
<line x1="842.5" y1="21.0" x2="842.5" y2="146.0" stroke="#000"/>
<line x1="821.0" y1="140.5" x2="842.5" y2="140.5" stroke="#000"/>
<text class="cb" x="846.2" y="141.9">80</text>
<line x1="821.0" y1="119.5" x2="842.5" y2="119.5" stroke="#000"/>
<text class="cb" x="846.2" y="120.9">90</text>
<line x1="821.0" y1="98.5" x2="842.5" y2="98.5" stroke="#000"/>
<text class="cb" x="846.2" y="99.9">100</text>
<line x1="821.0" y1="76.5" x2="842.5" y2="76.5" stroke="#000"/>
<text class="cb" x="846.2" y="77.9">110</text>
<line x1="821.0" y1="55.5" x2="842.5" y2="55.5" stroke="#000"/>
<text class="cb" x="846.2" y="56.9">120</text>
<line x1="821.0" y1="34.5" x2="842.5" y2="34.5" stroke="#000"/>
<text class="cb" x="846.2" y="35.9">130</text>
<rect x="802.0" y="306.80" width="40.5" height="6.50" fill="#6300ff"/>
<rect x="802.0" y="300.60" width="40.5" height="6.50" fill="#3300ff"/>
<rect x="802.0" y="294.40" width="40.5" height="6.50" fill="#0014ff"/>
<rect x="802.0" y="288.20" width="40.5" height="6.50" fill="#0044ff"/>
<rect x="802.0" y="282.00" width="40.5" height="6.50" fill="#008bff"/>
<rect x="802.0" y="275.80" width="40.5" height="6.50" fill="#00bbff"/>
<rect x="802.0" y="269.60" width="40.5" height="6.50" fill="#00fffc"/>
<rect x="802.0" y="263.40" width="40.5" height="6.50" fill="#00ffcc"/>
<rect x="802.0" y="257.20" width="40.5" height="6.50" fill="#00ff85"/>
<rect x="802.0" y="251.00" width="40.5" height="6.50" fill="#00ff55"/>
<rect x="802.0" y="244.80" width="40.5" height="6.50" fill="#00ff0e"/>
<rect x="802.0" y="238.60" width="40.5" height="6.50" fill="#22ff00"/>
<rect x="802.0" y="232.40" width="40.5" height="6.50" fill="#69ff00"/>
<rect x="802.0" y="226.20" width="40.5" height="6.50" fill="#99ff00"/>
<rect x="802.0" y="220.00" width="40.5" height="6.50" fill="#e0ff00"/>
<rect x="802.0" y="213.80" width="40.5" height="6.50" fill="#ffee00"/>
<rect x="802.0" y="207.60" width="40.5" height="6.50" fill="#ffa700"/>
<rect x="802.0" y="201.40" width="40.5" height="6.50" fill="#ff7700"/>
<rect x="802.0" y="195.20" width="40.5" height="6.50" fill="#ff3000"/>
<rect x="802.0" y="189.00" width="40.5" height="6.50" fill="#ff0000"/>
<line x1="842.5" y1="189.0" x2="842.5" y2="314.0" stroke="#000"/>
<line x1="821.0" y1="313.5" x2="842.5" y2="313.5" stroke="#000"/>
<text class="cb" x="846.2" y="315.4">-2</text>
<line x1="821.0" y1="297.5" x2="842.5" y2="297.5" stroke="#000"/>
<text class="cb" x="846.2" y="299.4">-1.5</text>
<line x1="821.0" y1="282.5" x2="842.5" y2="282.5" stroke="#000"/>
<text class="cb" x="846.2" y="284.4">-1</text>
<line x1="821.0" y1="266.5" x2="842.5" y2="266.5" stroke="#000"/>
<text class="cb" x="846.2" y="268.4">-0.5</text>
<line x1="821.0" y1="251.5" x2="842.5" y2="251.5" stroke="#000"/>
<text class="cb" x="846.2" y="253.4">0</text>
<line x1="821.0" y1="235.5" x2="842.5" y2="235.5" stroke="#000"/>
<text class="cb" x="846.2" y="237.4">0.5</text>
<line x1="821.0" y1="220.5" x2="842.5" y2="220.5" stroke="#000"/>
<text class="cb" x="846.2" y="222.4">1</text>
<line x1="821.0" y1="204.5" x2="842.5" y2="204.5" stroke="#000"/>
<text class="cb" x="846.2" y="206.4">1.5</text>
<line x1="821.0" y1="189.5" x2="842.5" y2="189.5" stroke="#000"/>
<text class="cb" x="846.2" y="191.4">2</text>
<text class="s b" x="312.2" y="354.7">Test Summary of M0993</text><text class="s b" x="465.7" y="354.7">T-10a</text>
<text class="s b" x="767" y="354.7">GRADE:</text><text class="s b" x="824" y="354.7">A</text>
<text class="s" x="312.2" y="378.6">ROCs &gt; 1% defects:</text><text class="s" x="446.7" y="378.6">0</text>
<text class="s" x="312.2" y="395.7">Dead Pixel:</text><text class="s" x="446.7" y="395.7">0</text>
<text class="s" x="312.2" y="412.8">Mask Defects:</text><text class="s" x="446.7" y="412.8">0</text>
<text class="s" x="312.2" y="429.9">Dead Bumps:</text><text class="s" x="446.7" y="429.9">4</text>
<text class="s" x="312.2" y="447.0">Dead Trimbits:</text><text class="s" x="446.7" y="447.0">0</text>
<text class="s" x="312.2" y="464.1">Address Probl:</text><text class="s" x="446.7" y="464.1">0</text>
<text class="s" x="507.3" y="378.7">Tested on:</text><text class="s" x="604.0" y="378.7">Sep 24</text>
<text class="s" x="507.3" y="395.6">Temp. [<tspan font-size="8" dy="-6.1">o</tspan><tspan dy="6.1">C]:</tspan></text><text class="s" x="604.0" y="395.6">-10.0 +- 0.0</text>
<text class="s" x="507.3" y="411.9">Trim / phCal:</text><text class="s" x="604.0" y="411.9">yes / yes</text>
<text class="s" x="507.3" y="428.5">Therm. cycl.:</text><text class="s" x="604.0" y="428.5">yes</text>
<text class="s" x="507.3" y="445.1">TBM1:</text><text class="s" x="604.0" y="445.1">ok</text>
<text class="s" x="507.3" y="461.6">TBM2:</text><text class="s" x="604.0" y="461.6">ok</text>
<text class="s" x="670" y="378.7">Noise [e]</text><text class="s" x="801" y="378.7">150.6</text>
<text class="s" x="670" y="395.6">Vcal Thr. Width [e]</text><text class="s" x="801" y="395.6">90.6</text>
<text class="s" x="670" y="411.9">Rel. Gain Width [%]</text><text class="s" x="801" y="411.9">3.5</text>
<text class="s" x="670" y="428.5">Pedestal Spread [e]</text><text class="s" x="801" y="428.5">1441.0</text>
<text class="s" x="57.3" y="520.5">Noise</text>
<rect x="47.5" y="527.5" width="151" height="121.0" fill="none" stroke="#000"/>
<text class="gx" text-anchor="end" x="45.6" y="650.9">0</text>
<line x1="47.5" y1="628.5" x2="52.5" y2="628.5" stroke="#000"/>
<text class="gx" text-anchor="end" x="45.6" y="630.9">100</text>
<line x1="47.5" y1="607.5" x2="52.5" y2="607.5" stroke="#000"/>
<text class="gx" text-anchor="end" x="45.6" y="609.9">200</text>
<line x1="47.5" y1="587.5" x2="52.5" y2="587.5" stroke="#000"/>
<text class="gx" text-anchor="end" x="45.6" y="589.9">300</text>
<line x1="47.5" y1="567.5" x2="52.5" y2="567.5" stroke="#000"/>
<text class="gx" text-anchor="end" x="45.6" y="569.9">400</text>
<line x1="47.5" y1="547.5" x2="52.5" y2="547.5" stroke="#000"/>
<text class="gx" text-anchor="end" x="45.6" y="549.9">500</text>
<text class="gx" text-anchor="end" x="45.6" y="529.9">600</text>
<text class="gx" text-anchor="middle" x="46.3" y="658.1">0</text>
<line x1="66.5" y1="648.5" x2="66.5" y2="643.5" stroke="#000"/>
<text class="gx" text-anchor="middle" x="65.3" y="658.1">2</text>
<line x1="85.5" y1="648.5" x2="85.5" y2="643.5" stroke="#000"/>
<text class="gx" text-anchor="middle" x="84.3" y="658.1">4</text>
<line x1="104.5" y1="648.5" x2="104.5" y2="643.5" stroke="#000"/>
<text class="gx" text-anchor="middle" x="103.3" y="658.1">6</text>
<line x1="123.5" y1="648.5" x2="123.5" y2="643.5" stroke="#000"/>
<text class="gx" text-anchor="middle" x="122.3" y="658.1">8</text>
<line x1="141.5" y1="648.5" x2="141.5" y2="643.5" stroke="#000"/>
<text class="gx" text-anchor="middle" x="140.3" y="658.1">10</text>
<line x1="160.5" y1="648.5" x2="160.5" y2="643.5" stroke="#000"/>
<text class="gx" text-anchor="middle" x="159.3" y="658.1">12</text>
<line x1="179.5" y1="648.5" x2="179.5" y2="643.5" stroke="#000"/>
<text class="gx" text-anchor="middle" x="178.3" y="658.1">14</text>
<text class="gx" text-anchor="middle" x="197.3" y="658.1">16</text>
<line x1="47.0" y1="547.5" x2="198.5" y2="547.5" stroke="#f00" stroke-dasharray="3 3"/>
<path d="M47.8 617.5H57.2M52.5 613.0V622.0" stroke="#0000ff" fill="none"/>
<circle class="aa" cx="52.5" cy="617.5" r="2.4" fill="#fff" stroke="#0000ff"/>
<path d="M56.8 620.5H66.2M61.5 617.0V624.0" stroke="#0000ff" fill="none"/>
<circle class="aa" cx="61.5" cy="620.5" r="2.4" fill="#fff" stroke="#0000ff"/>
<path d="M66.8 618.5H76.2M71.5 615.0V622.0" stroke="#0000ff" fill="none"/>
<circle class="aa" cx="71.5" cy="618.5" r="2.4" fill="#fff" stroke="#0000ff"/>
<path d="M75.8 616.5H85.2M80.5 611.0V622.0" stroke="#0000ff" fill="none"/>
<circle class="aa" cx="80.5" cy="616.5" r="2.4" fill="#fff" stroke="#0000ff"/>
<path d="M84.8 618.5H94.2M89.5 614.5V622.5" stroke="#0000ff" fill="none"/>
<circle class="aa" cx="89.5" cy="618.5" r="2.4" fill="#fff" stroke="#0000ff"/>
<path d="M94.8 618.5H104.2M99.5 613.5V623.5" stroke="#0000ff" fill="none"/>
<circle class="aa" cx="99.5" cy="618.5" r="2.4" fill="#fff" stroke="#0000ff"/>
<path d="M103.8 617.5H113.2M108.5 613.5V621.5" stroke="#0000ff" fill="none"/>
<circle class="aa" cx="108.5" cy="617.5" r="2.4" fill="#fff" stroke="#0000ff"/>
<path d="M113.8 616.5H123.2M118.5 611.5V621.5" stroke="#0000ff" fill="none"/>
<circle class="aa" cx="118.5" cy="616.5" r="2.4" fill="#fff" stroke="#0000ff"/>
<path d="M122.8 617.5H132.2M127.5 612.0V623.0" stroke="#0000ff" fill="none"/>
<circle class="aa" cx="127.5" cy="617.5" r="2.4" fill="#fff" stroke="#0000ff"/>
<path d="M132.8 617.5H142.2M137.5 612.0V623.0" stroke="#0000ff" fill="none"/>
<circle class="aa" cx="137.5" cy="617.5" r="2.4" fill="#fff" stroke="#0000ff"/>
<path d="M141.8 617.5H151.2M146.5 613.5V621.5" stroke="#0000ff" fill="none"/>
<circle class="aa" cx="146.5" cy="617.5" r="2.4" fill="#fff" stroke="#0000ff"/>
<path d="M151.8 619.5H161.2M156.5 615.0V624.0" stroke="#0000ff" fill="none"/>
<circle class="aa" cx="156.5" cy="619.5" r="2.4" fill="#fff" stroke="#0000ff"/>
<path d="M160.8 617.5H170.2M165.5 611.5V623.5" stroke="#0000ff" fill="none"/>
<circle class="aa" cx="165.5" cy="617.5" r="2.4" fill="#fff" stroke="#0000ff"/>
<path d="M169.8 617.5H179.2M174.5 613.0V622.0" stroke="#0000ff" fill="none"/>
<circle class="aa" cx="174.5" cy="617.5" r="2.4" fill="#fff" stroke="#0000ff"/>
<path d="M179.8 619.5H189.2M184.5 614.5V624.5" stroke="#0000ff" fill="none"/>
<circle class="aa" cx="184.5" cy="619.5" r="2.4" fill="#fff" stroke="#0000ff"/>
<path d="M188.8 616.5H198.2M193.5 612.0V621.0" stroke="#0000ff" fill="none"/>
<circle class="aa" cx="193.5" cy="616.5" r="2.4" fill="#fff" stroke="#0000ff"/>
<text class="s" x="277.6" y="520.5">Vcal Thr. Width</text>
<rect x="267.5" y="527.5" width="151" height="121.0" fill="none" stroke="#000"/>
<text class="gx" text-anchor="end" x="264.4" y="650.9">0</text>
<line x1="267.5" y1="628.5" x2="272.5" y2="628.5" stroke="#000"/>
<text class="gx" text-anchor="end" x="264.4" y="630.9">50</text>
<line x1="267.5" y1="607.5" x2="272.5" y2="607.5" stroke="#000"/>
<text class="gx" text-anchor="end" x="264.4" y="609.9">100</text>
<line x1="267.5" y1="587.5" x2="272.5" y2="587.5" stroke="#000"/>
<text class="gx" text-anchor="end" x="264.4" y="589.9">150</text>
<line x1="267.5" y1="567.5" x2="272.5" y2="567.5" stroke="#000"/>
<text class="gx" text-anchor="end" x="264.4" y="569.9">200</text>
<line x1="267.5" y1="547.5" x2="272.5" y2="547.5" stroke="#000"/>
<text class="gx" text-anchor="end" x="264.4" y="549.9">250</text>
<text class="gx" text-anchor="end" x="264.4" y="529.9">300</text>
<text class="gx" text-anchor="middle" x="266.3" y="658.1">0</text>
<line x1="286.5" y1="648.5" x2="286.5" y2="643.5" stroke="#000"/>
<text class="gx" text-anchor="middle" x="285.3" y="658.1">2</text>
<line x1="305.5" y1="648.5" x2="305.5" y2="643.5" stroke="#000"/>
<text class="gx" text-anchor="middle" x="304.3" y="658.1">4</text>
<line x1="324.5" y1="648.5" x2="324.5" y2="643.5" stroke="#000"/>
<text class="gx" text-anchor="middle" x="323.3" y="658.1">6</text>
<line x1="343.5" y1="648.5" x2="343.5" y2="643.5" stroke="#000"/>
<text class="gx" text-anchor="middle" x="342.3" y="658.1">8</text>
<line x1="361.5" y1="648.5" x2="361.5" y2="643.5" stroke="#000"/>
<text class="gx" text-anchor="middle" x="360.3" y="658.1">10</text>
<line x1="380.5" y1="648.5" x2="380.5" y2="643.5" stroke="#000"/>
<text class="gx" text-anchor="middle" x="379.3" y="658.1">12</text>
<line x1="399.5" y1="648.5" x2="399.5" y2="643.5" stroke="#000"/>
<text class="gx" text-anchor="middle" x="398.3" y="658.1">14</text>
<text class="gx" text-anchor="middle" x="417.3" y="658.1">16</text>
<line x1="267.0" y1="567.5" x2="418.5" y2="567.5" stroke="#f00" stroke-dasharray="3 3"/>
<polyline fill="none" stroke="#33cc33" stroke-width="1" points="272.5,610.5 281.5,609.5 291.5,614.5 300.5,611.5 309.5,613.5 319.5,612.5 328.5,610.5 338.5,604.5 347.5,608.5 357.5,615.5 366.5,612.5 376.5,609.5 385.5,614.5 394.5,614.5 404.5,612.5 413.5,613.5"/>
<rect x="270.5" y="608.5" width="4" height="4" fill="none" stroke="#33cc33"/>
<rect x="279.5" y="607.5" width="4" height="4" fill="none" stroke="#33cc33"/>
<rect x="289.5" y="612.5" width="4" height="4" fill="none" stroke="#33cc33"/>
<rect x="298.5" y="609.5" width="4" height="4" fill="none" stroke="#33cc33"/>
<rect x="307.5" y="611.5" width="4" height="4" fill="none" stroke="#33cc33"/>
<rect x="317.5" y="610.5" width="4" height="4" fill="none" stroke="#33cc33"/>
<rect x="326.5" y="608.5" width="4" height="4" fill="none" stroke="#33cc33"/>
<rect x="336.5" y="602.5" width="4" height="4" fill="none" stroke="#33cc33"/>
<rect x="345.5" y="606.5" width="4" height="4" fill="none" stroke="#33cc33"/>
<rect x="355.5" y="613.5" width="4" height="4" fill="none" stroke="#33cc33"/>
<rect x="364.5" y="610.5" width="4" height="4" fill="none" stroke="#33cc33"/>
<rect x="374.5" y="607.5" width="4" height="4" fill="none" stroke="#33cc33"/>
<rect x="383.5" y="612.5" width="4" height="4" fill="none" stroke="#33cc33"/>
<rect x="392.5" y="612.5" width="4" height="4" fill="none" stroke="#33cc33"/>
<rect x="402.5" y="610.5" width="4" height="4" fill="none" stroke="#33cc33"/>
<rect x="411.5" y="611.5" width="4" height="4" fill="none" stroke="#33cc33"/>
<text class="s" x="496.6" y="520.5">Rel. Gain Width</text>
<rect x="486.5" y="527.5" width="151" height="121.0" fill="none" stroke="#000"/>
<text class="gx" text-anchor="end" x="485.1" y="650.9">0</text>
<line x1="486.5" y1="632.5" x2="491.5" y2="632.5" stroke="#000"/>
<text class="gx" text-anchor="end" x="485.1" y="634.9">0.02</text>
<line x1="486.5" y1="615.5" x2="491.5" y2="615.5" stroke="#000"/>
<text class="gx" text-anchor="end" x="485.1" y="617.9">0.04</text>
<line x1="486.5" y1="599.5" x2="491.5" y2="599.5" stroke="#000"/>
<text class="gx" text-anchor="end" x="485.1" y="601.9">0.06</text>
<line x1="486.5" y1="583.5" x2="491.5" y2="583.5" stroke="#000"/>
<text class="gx" text-anchor="end" x="485.1" y="585.9">0.08</text>
<line x1="486.5" y1="567.5" x2="491.5" y2="567.5" stroke="#000"/>
<text class="gx" text-anchor="end" x="485.1" y="569.9">0.1</text>
<line x1="486.5" y1="551.5" x2="491.5" y2="551.5" stroke="#000"/>
<text class="gx" text-anchor="end" x="485.1" y="553.9">0.12</text>
<line x1="486.5" y1="535.5" x2="491.5" y2="535.5" stroke="#000"/>
<text class="gx" text-anchor="end" x="485.1" y="537.9">0.14</text>
<text class="gx" text-anchor="middle" x="485.3" y="658.1">0</text>
<line x1="505.5" y1="648.5" x2="505.5" y2="643.5" stroke="#000"/>
<text class="gx" text-anchor="middle" x="504.3" y="658.1">2</text>
<line x1="524.5" y1="648.5" x2="524.5" y2="643.5" stroke="#000"/>
<text class="gx" text-anchor="middle" x="523.3" y="658.1">4</text>
<line x1="543.5" y1="648.5" x2="543.5" y2="643.5" stroke="#000"/>
<text class="gx" text-anchor="middle" x="542.3" y="658.1">6</text>
<line x1="562.5" y1="648.5" x2="562.5" y2="643.5" stroke="#000"/>
<text class="gx" text-anchor="middle" x="561.3" y="658.1">8</text>
<line x1="580.5" y1="648.5" x2="580.5" y2="643.5" stroke="#000"/>
<text class="gx" text-anchor="middle" x="579.3" y="658.1">10</text>
<line x1="599.5" y1="648.5" x2="599.5" y2="643.5" stroke="#000"/>
<text class="gx" text-anchor="middle" x="598.3" y="658.1">12</text>
<line x1="618.5" y1="648.5" x2="618.5" y2="643.5" stroke="#000"/>
<text class="gx" text-anchor="middle" x="617.3" y="658.1">14</text>
<text class="gx" text-anchor="middle" x="636.3" y="658.1">16</text>
<line x1="486.0" y1="567.5" x2="637.5" y2="567.5" stroke="#f00" stroke-dasharray="3 3"/>
<polyline fill="none" stroke="#ff00ff" stroke-width="1" points="491.5,620.5 500.5,617.5 510.5,623.5 519.5,627.5 528.5,626.5 538.5,622.5 547.5,610.5 557.5,614.5 566.5,610.5 576.5,627.5 585.5,621.5 595.5,625.5 604.5,615.5 613.5,626.5 623.5,619.5 632.5,615.5"/>
<path d="M491.5 618.5L493.5 622.5L489.5 622.5Z" fill="none" stroke="#ff00ff"/>
<path d="M500.5 615.5L502.5 619.5L498.5 619.5Z" fill="none" stroke="#ff00ff"/>
<path d="M510.5 621.5L512.5 625.5L508.5 625.5Z" fill="none" stroke="#ff00ff"/>
<path d="M519.5 625.5L521.5 629.5L517.5 629.5Z" fill="none" stroke="#ff00ff"/>
<path d="M528.5 624.5L530.5 628.5L526.5 628.5Z" fill="none" stroke="#ff00ff"/>
<path d="M538.5 620.5L540.5 624.5L536.5 624.5Z" fill="none" stroke="#ff00ff"/>
<path d="M547.5 608.5L549.5 612.5L545.5 612.5Z" fill="none" stroke="#ff00ff"/>
<path d="M557.5 612.5L559.5 616.5L555.5 616.5Z" fill="none" stroke="#ff00ff"/>
<path d="M566.5 608.5L568.5 612.5L564.5 612.5Z" fill="none" stroke="#ff00ff"/>
<path d="M576.5 625.5L578.5 629.5L574.5 629.5Z" fill="none" stroke="#ff00ff"/>
<path d="M585.5 619.5L587.5 623.5L583.5 623.5Z" fill="none" stroke="#ff00ff"/>
<path d="M595.5 623.5L597.5 627.5L593.5 627.5Z" fill="none" stroke="#ff00ff"/>
<path d="M604.5 613.5L606.5 617.5L602.5 617.5Z" fill="none" stroke="#ff00ff"/>
<path d="M613.5 624.5L615.5 628.5L611.5 628.5Z" fill="none" stroke="#ff00ff"/>
<path d="M623.5 617.5L625.5 621.5L621.5 621.5Z" fill="none" stroke="#ff00ff"/>
<path d="M632.5 613.5L634.5 617.5L630.5 617.5Z" fill="none" stroke="#ff00ff"/>
<text class="s" x="715.4" y="520.5">Pedestal Spread</text>
<rect x="706.5" y="527.5" width="151" height="121.0" fill="none" stroke="#000"/>
<text class="gx" text-anchor="end" x="704.2" y="650.9">0</text>
<line x1="706.5" y1="630.5" x2="711.5" y2="630.5" stroke="#000"/>
<text class="gx" text-anchor="end" x="704.2" y="632.9">500</text>
<line x1="706.5" y1="613.5" x2="711.5" y2="613.5" stroke="#000"/>
<text class="gx" text-anchor="end" x="704.2" y="615.9">1000</text>
<line x1="706.5" y1="596.5" x2="711.5" y2="596.5" stroke="#000"/>
<text class="gx" text-anchor="end" x="704.2" y="598.9">1500</text>
<line x1="706.5" y1="579.5" x2="711.5" y2="579.5" stroke="#000"/>
<text class="gx" text-anchor="end" x="704.2" y="581.9">2000</text>
<line x1="706.5" y1="561.5" x2="711.5" y2="561.5" stroke="#000"/>
<text class="gx" text-anchor="end" x="704.2" y="563.9">2500</text>
<line x1="706.5" y1="544.5" x2="711.5" y2="544.5" stroke="#000"/>
<text class="gx" text-anchor="end" x="704.2" y="546.9">3000</text>
<text class="gx" text-anchor="end" x="704.2" y="529.9">3500</text>
<text class="gx" text-anchor="middle" x="705.3" y="658.1">0</text>
<line x1="725.5" y1="648.5" x2="725.5" y2="643.5" stroke="#000"/>
<text class="gx" text-anchor="middle" x="724.3" y="658.1">2</text>
<line x1="744.5" y1="648.5" x2="744.5" y2="643.5" stroke="#000"/>
<text class="gx" text-anchor="middle" x="743.3" y="658.1">4</text>
<line x1="763.5" y1="648.5" x2="763.5" y2="643.5" stroke="#000"/>
<text class="gx" text-anchor="middle" x="762.3" y="658.1">6</text>
<line x1="782.5" y1="648.5" x2="782.5" y2="643.5" stroke="#000"/>
<text class="gx" text-anchor="middle" x="781.3" y="658.1">8</text>
<line x1="800.5" y1="648.5" x2="800.5" y2="643.5" stroke="#000"/>
<text class="gx" text-anchor="middle" x="799.3" y="658.1">10</text>
<line x1="819.5" y1="648.5" x2="819.5" y2="643.5" stroke="#000"/>
<text class="gx" text-anchor="middle" x="818.3" y="658.1">12</text>
<line x1="838.5" y1="648.5" x2="838.5" y2="643.5" stroke="#000"/>
<text class="gx" text-anchor="middle" x="837.3" y="658.1">14</text>
<text class="gx" text-anchor="middle" x="856.3" y="658.1">16</text>
<line x1="706.0" y1="561.5" x2="857.5" y2="561.5" stroke="#f00" stroke-dasharray="3 3"/>
<polyline fill="none" stroke="#000" stroke-width="1" points="711.5,587.5 720.5,596.5 730.5,598.5 739.5,594.5 748.5,592.5 758.5,610.5 767.5,603.5 777.5,585.5 786.5,591.5 796.5,597.5 805.5,598.5 815.5,605.5 824.5,604.5 833.5,604.5 843.5,591.5 852.5,599.5"/>
<path d="M709 586h5v1h-1v2h-1v1h-1v-1h-1v-2h-1z" fill="#000" stroke="none"/>
<path d="M718 595h5v1h-1v2h-1v1h-1v-1h-1v-2h-1z" fill="#000" stroke="none"/>
<path d="M728 597h5v1h-1v2h-1v1h-1v-1h-1v-2h-1z" fill="#000" stroke="none"/>
<path d="M737 593h5v1h-1v2h-1v1h-1v-1h-1v-2h-1z" fill="#000" stroke="none"/>
<path d="M746 591h5v1h-1v2h-1v1h-1v-1h-1v-2h-1z" fill="#000" stroke="none"/>
<path d="M756 609h5v1h-1v2h-1v1h-1v-1h-1v-2h-1z" fill="#000" stroke="none"/>
<path d="M765 602h5v1h-1v2h-1v1h-1v-1h-1v-2h-1z" fill="#000" stroke="none"/>
<path d="M775 584h5v1h-1v2h-1v1h-1v-1h-1v-2h-1z" fill="#000" stroke="none"/>
<path d="M784 590h5v1h-1v2h-1v1h-1v-1h-1v-2h-1z" fill="#000" stroke="none"/>
<path d="M794 596h5v1h-1v2h-1v1h-1v-1h-1v-2h-1z" fill="#000" stroke="none"/>
<path d="M803 597h5v1h-1v2h-1v1h-1v-1h-1v-2h-1z" fill="#000" stroke="none"/>
<path d="M813 604h5v1h-1v2h-1v1h-1v-1h-1v-2h-1z" fill="#000" stroke="none"/>
<path d="M822 603h5v1h-1v2h-1v1h-1v-1h-1v-2h-1z" fill="#000" stroke="none"/>
<path d="M831 603h5v1h-1v2h-1v1h-1v-1h-1v-2h-1z" fill="#000" stroke="none"/>
<path d="M841 590h5v1h-1v2h-1v1h-1v-1h-1v-2h-1z" fill="#000" stroke="none"/>
<path d="M850 598h5v1h-1v2h-1v1h-1v-1h-1v-2h-1z" fill="#000" stroke="none"/>
</svg></body></html>
